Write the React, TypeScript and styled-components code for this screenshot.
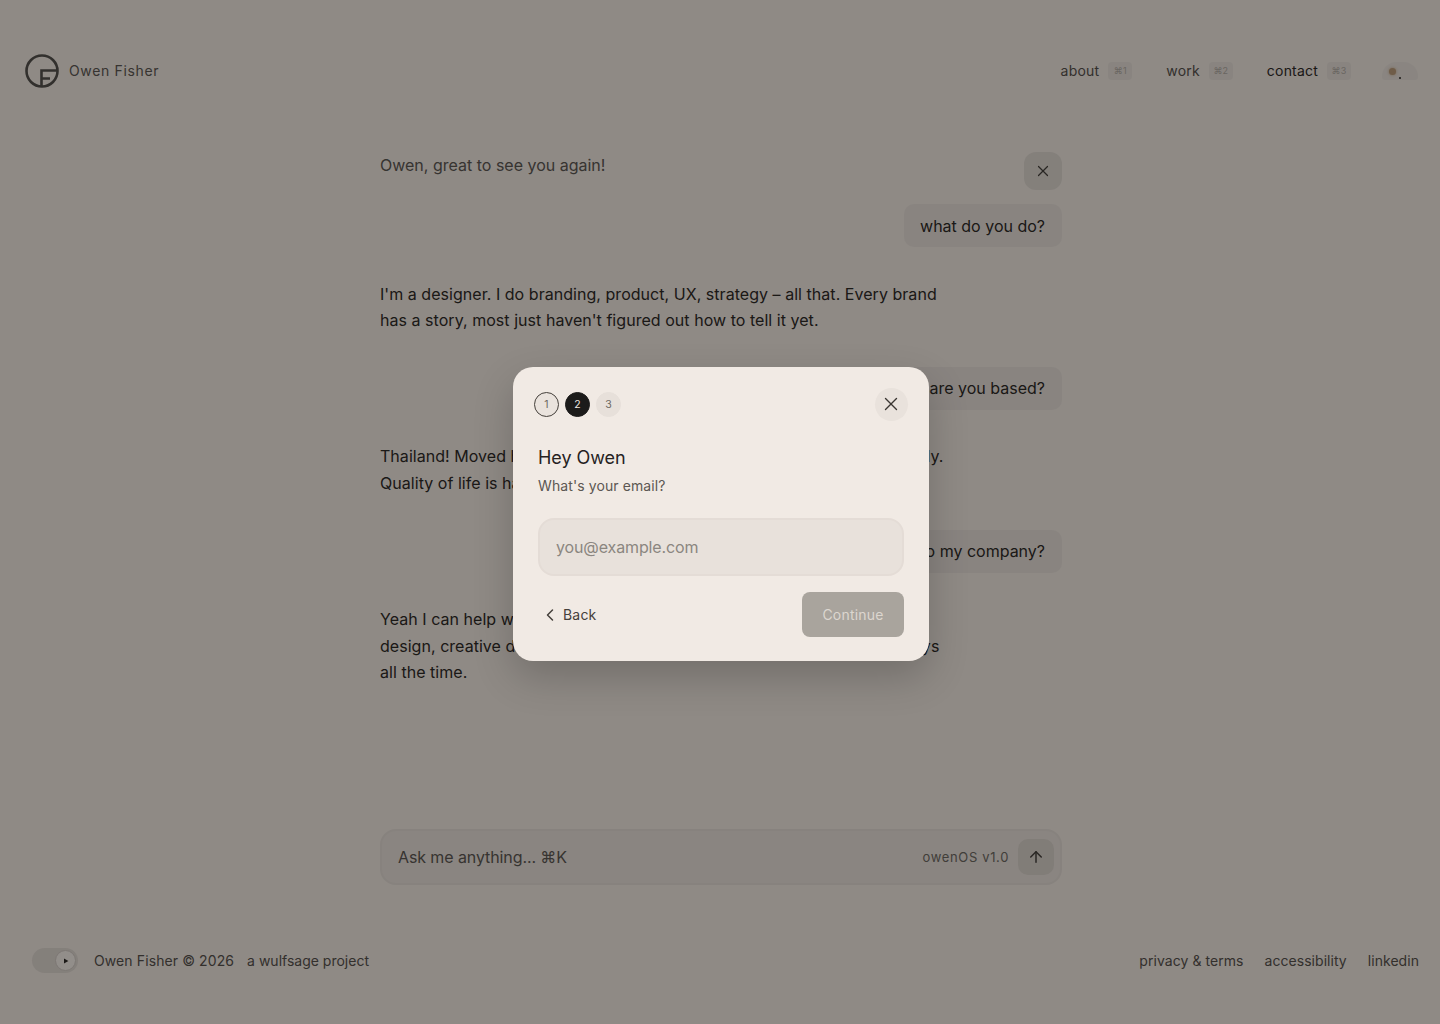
import React from "react";
import styled, { createGlobalStyle } from "styled-components";
import { ArrowUp, ChevronLeft, X } from "lucide-react";

const navItems = [
  { label: "about", keys: "⌘1" },
  { label: "work", keys: "⌘2" },
  { label: "contact", keys: "⌘3", active: true },
];

const App: React.FC = () => {
  return (
    <Root>
      <GlobalStyle />
      <Header>
        <Brand>
          <svg width="34" height="34" viewBox="0 0 34 34" fill="none" stroke="#54504c" strokeWidth="2.6">
            <circle cx="17" cy="17" r="15.5" />
            <path d="M32.5 16.5H16.5v16M16.5 24.5h8.5" />
          </svg>
          <BrandName>Owen Fisher</BrandName>
        </Brand>
        <Nav>
          {navItems.map((item) => (
            <NavItem key={item.label} $active={item.active}>
              {item.label}
              <Kbd>{item.keys}</Kbd>
            </NavItem>
          ))}
          <ThemeIcon>
            <Sun />
            <Dot />
          </ThemeIcon>
        </Nav>
      </Header>

      <Main>
        <Greeting>
          <GreetingText>Owen, great to see you again!</GreetingText>
          <ClearButton>
            <X size={18} strokeWidth={1.6} />
          </ClearButton>
        </Greeting>
        <UserBubble $first>what do you do?</UserBubble>
        <Answer>
          I'm a designer. I do branding, product, UX, strategy – all that. Every brand
          <br />
          has a story, most just haven't figured out how to tell it yet.
        </Answer>
        <UserBubble>where are you based?</UserBubble>
        <Answer>
          Thailand! Moved here a few years ago, it's been the best choice, honestly.
          <br />
          Quality of life is hard to beat out here.
        </Answer>
        <UserBubble>can you bring value to my company?</UserBubble>
        <Answer>
          Yeah I can help with that. I do brand identity, product
          <br />
          design, creative direction, websites, motion. I help founders in this always
          <br />
          all the time.
        </Answer>
        <Composer>
          <ComposerPlaceholder>Ask me anything... ⌘K</ComposerPlaceholder>
          <Version>owenOS v1.0</Version>
          <SendButton>
            <ArrowUp size={18} strokeWidth={2} />
          </SendButton>
        </Composer>
      </Main>

      <Footer>
        <FooterLeft>
          <Toggle>
            <Knob>
              <svg width="6" height="6" viewBox="0 0 6 6" fill="#2e2a27">
                <path d="M1 0.4 5.4 3 1 5.6z" />
              </svg>
            </Knob>
          </Toggle>
          <FooterOwner>Owen Fisher © 2026</FooterOwner>
          <FooterProject>a wulfsage project</FooterProject>
        </FooterLeft>
        <FooterLinks>
          <span>privacy &amp; terms</span>
          <span>accessibility</span>
          <span>linkedin</span>
        </FooterLinks>
      </Footer>

      <Overlay>
        <Modal>
          <ModalTop>
            <Steps>
              <Step $state="done">1</Step>
              <Step $state="current">2</Step>
              <Step $state="next">3</Step>
            </Steps>
            <CloseButton>
              <X size={22} strokeWidth={1.5} />
            </CloseButton>
          </ModalTop>
          <ModalBody>
            <Title>Hey Owen</Title>
            <Subtitle>What's your email?</Subtitle>
            <EmailInput placeholder="you@example.com" readOnly />
            <Actions>
              <BackButton>
                <ChevronLeft size={20} strokeWidth={1.8} />
                Back
              </BackButton>
              <ContinueButton>Continue</ContinueButton>
            </Actions>
          </ModalBody>
        </Modal>
      </Overlay>
    </Root>
  );
};

export default App;

const GlobalStyle = createGlobalStyle`
  * {
    box-sizing: border-box;
  }
  body {
    margin: 0;
    background: #eee6de;
    font-family: Inter, "Liberation Sans", sans-serif;
  }
`;

const Root = styled.div`
  position: relative;
  width: 1440px;
  height: 1024px;
  overflow: hidden;
  display: flex;
  flex-direction: column;
  color: #2e2a27;
`;

const Header = styled.header`
  height: 112px;
  padding: 30px 22px 0 25px;
  display: flex;
  justify-content: space-between;
  align-items: center;
`;

const Brand = styled.div`
  display: flex;
  align-items: center;
  gap: 10px;
`;

const BrandName = styled.span`
  padding-bottom: 1px;
  font-size: 14px;
  letter-spacing: 0.65px;
  color: #5c5752;
`;

const Nav = styled.nav`
  display: flex;
  align-items: center;
`;

const NavItem = styled.div<{ $active?: boolean }>`
  display: flex;
  align-items: center;
  gap: 9px;
  margin-right: 34px;
  padding-bottom: 1px;
  font-size: 14px;
  letter-spacing: 0.2px;
  color: ${({ $active }) => ($active ? "#2e2a27" : "#56514c")};
`;

const Kbd = styled.span`
  width: 24px;
  height: 18px;
  border-radius: 4px;
  background: #e5ddd6;
  color: #b0a9a2;
  font-size: 9px;
  display: flex;
  align-items: center;
  justify-content: center;
`;

const ThemeIcon = styled.div`
  position: relative;
  width: 36px;
  height: 18px;
  margin-left: -3px;
  background: #e6ded7;
  border-radius: 18px 18px 4px 4px;
`;

const Sun = styled.span`
  position: absolute;
  left: 7px;
  top: 6px;
  width: 7px;
  height: 7px;
  border-radius: 50%;
  background: #b99a78;
  box-shadow: 0 0 3px #c4a583;
`;

const Dot = styled.span`
  position: absolute;
  left: 17px;
  top: 15px;
  width: 2px;
  height: 2px;
  border-radius: 50%;
  background: #2e2a27;
`;

const Main = styled.main`
  width: 682px;
  margin-left: 380px;
  flex: 1;
  display: flex;
  flex-direction: column;
  padding-top: 40px;
`;

const Greeting = styled.div`
  display: flex;
  justify-content: space-between;
  align-items: flex-start;
`;

const GreetingText = styled.p`
  margin: 0;
  font-size: 16px;
  line-height: 26.5px;
  color: #5c5752;
`;

const ClearButton = styled.div`
  width: 38px;
  height: 38px;
  border-radius: 12px;
  background: #ddd5ce;
  color: #45403b;
  display: flex;
  align-items: center;
  justify-content: center;
`;

const UserBubble = styled.div<{ $first?: boolean }>`
  align-self: flex-end;
  height: 43px;
  padding: 0 17px 0 16px;
  margin-top: ${({ $first }) => ($first ? "14px" : "0")};
  border-radius: 10px;
  background: #e5ddd6;
  font-size: 16px;
  display: flex;
  align-items: center;
`;

const Answer = styled.p`
  margin: 33.5px 0 33.25px;
  font-size: 16px;
  line-height: 26.5px;
  letter-spacing: 0.04px;
`;

const Composer = styled.div`
  margin-top: auto;
  height: 56px;
  padding: 0 6px 0 16px;
  border-radius: 16px;
  border: 2px solid #e1d9d2;
  background: #e6ded7;
  display: flex;
  align-items: center;
`;

const ComposerPlaceholder = styled.span`
  flex: 1;
  font-size: 16px;
  letter-spacing: -0.1px;
  color: #5c5752;
`;

const Version = styled.span`
  font-size: 13px;
  letter-spacing: 0.65px;
  color: #6d6862;
  margin-right: 9px;
`;

const SendButton = styled.div`
  width: 36px;
  height: 36px;
  border-radius: 10px;
  background: #d8d0c9;
  color: #45403b;
  display: flex;
  align-items: center;
  justify-content: center;
`;

const Footer = styled.footer`
  height: 139px;
  padding: 63px 21px 0 32px;
  display: flex;
  justify-content: space-between;
  align-items: flex-start;
  font-size: 14px;
  letter-spacing: 0.1px;
  color: #56514c;
`;

const FooterLeft = styled.div`
  display: flex;
  align-items: center;
`;

const FooterOwner = styled.span`
  margin-right: 13px;
`;

const FooterProject = styled.span`
  letter-spacing: 0;
`;

const Toggle = styled.div`
  width: 46px;
  height: 25px;
  margin-right: 16px;
  border-radius: 13px;
  background: #ddd5ce;
  display: flex;
  align-items: center;
  justify-content: flex-end;
  padding-right: 2px;
`;

const Knob = styled.div`
  width: 21px;
  height: 21px;
  border-radius: 50%;
  border: 1px solid #cfc7c0;
  background: #f4ede7;
  display: flex;
  align-items: center;
  justify-content: center;
`;

const FooterLinks = styled.div`
  display: flex;
  gap: 21px;
  line-height: 25px;
  letter-spacing: 0.05px;
`;

const Overlay = styled.div`
  position: absolute;
  inset: 0;
  background: rgba(0, 0, 0, 0.4);
`;

const Modal = styled.div`
  position: absolute;
  left: 513px;
  top: 367px;
  width: 416px;
  height: 294px;
  padding: 21px 21px 0 21px;
  border-radius: 20px;
  background: #f1eae4;
  box-shadow: 0 16px 40px rgba(0, 0, 0, 0.2);
`;

const ModalTop = styled.div`
  display: flex;
  justify-content: space-between;
  align-items: center;
  height: 33px;
`;

const Steps = styled.div`
  display: flex;
  gap: 6px;
`;

const stepColors = {
  done: "background: #eae3dd; color: #6d6862; border: 1px solid #45403b;",
  current: "background: #1c1b1a; color: #f0e9e3; border: 1px solid #1c1b1a;",
  next: "background: #e7e0da; color: #6d6862; border: 1px solid #e7e0da;",
};

const Step = styled.div<{ $state: "done" | "current" | "next" }>`
  width: 25px;
  height: 25px;
  border-radius: 50%;
  font-size: 10.5px;
  display: flex;
  align-items: center;
  justify-content: center;
  ${({ $state }) => stepColors[$state]}
`;

const CloseButton = styled.div`
  width: 33px;
  height: 33px;
  border-radius: 50%;
  background: #e9e2dc;
  color: #3a3632;
  display: flex;
  align-items: center;
  justify-content: center;
  svg {
    margin: 0 1px 1px 0;
  }
`;

const ModalBody = styled.div`
  padding: 24px 4px 0 4px;
  display: flex;
  flex-direction: column;
`;

const Title = styled.h2`
  margin: 0;
  font-size: 18px;
  line-height: 26px;
  font-weight: 400;
  letter-spacing: -0.05px;
  color: #26221f;
`;

const Subtitle = styled.p`
  margin: 5px 0 0;
  font-size: 14px;
  line-height: 20px;
  letter-spacing: 0.1px;
  color: #5c5752;
`;

const EmailInput = styled.input`
  width: 366px;
  height: 58px;
  margin-top: 22px;
  padding: 0 16px;
  border-radius: 16px;
  border: 2px solid #e4dcd6;
  background: #e8e1db;
  outline: none;
  font-family: inherit;
  font-size: 16px;
  letter-spacing: -0.12px;
  color: #26221f;
  &::placeholder {
    color: #8b8680;
  }
`;

const Actions = styled.div`
  margin-top: 16px;
  display: flex;
  justify-content: space-between;
  align-items: center;
`;

const BackButton = styled.div`
  display: flex;
  align-items: center;
  gap: 3px;
  font-size: 14px;
  letter-spacing: 0.2px;
  color: #45403b;
  margin-left: 2px;
`;

const ContinueButton = styled.div`
  width: 102px;
  height: 45px;
  border-radius: 8px;
  background: #a9a49d;
  color: #dcd6cf;
  font-size: 14px;
  letter-spacing: 0.2px;
  display: flex;
  align-items: center;
  justify-content: center;
`;
